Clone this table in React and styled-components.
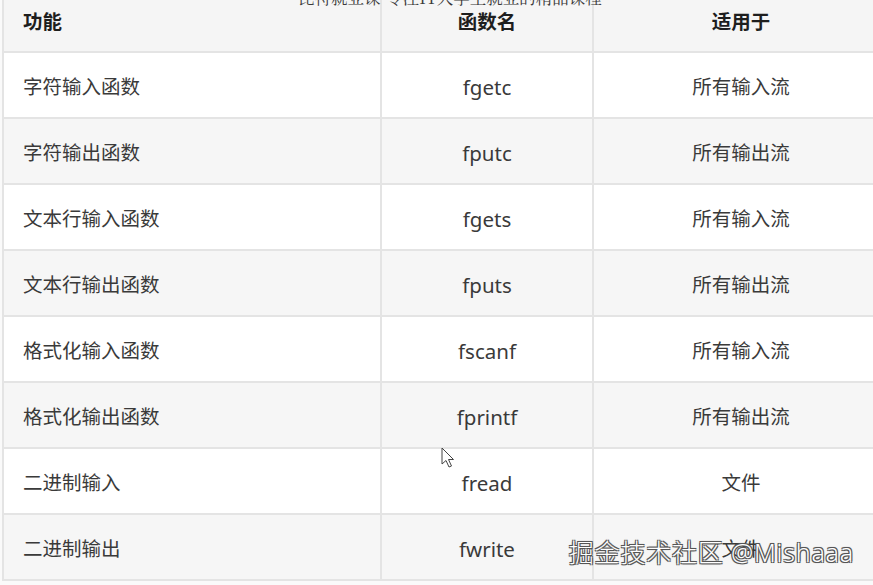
import React from "react";
import styled, { createGlobalStyle } from "styled-components";

const Global = createGlobalStyle`
  html, body { margin: 0; padding: 0; background: #fafafa; }
  body { width: 873px; height: 585px; overflow: hidden; font-family: "Noto Sans", "Noto Sans CJK SC", sans-serif; }
  #root { position: relative; width: 873px; height: 585px; overflow: hidden; }
`;

const Table = styled.div`
  margin-left: 2px;
  width: 884px;
  border-left: 2px solid #e4e4e4;
  display: flex;
  flex-direction: column;
`;

const Row = styled.div`
  display: grid;
  grid-template-columns: 378px 212px 1fr;
  height: ${(p) => (p.$head ? 53 : 66)}px;
  box-sizing: border-box;
  border-bottom: 2px solid #e4e4e4;
  background: ${(p) => (p.$head ? "#f5f5f5" : p.$alt ? "#f6f6f6" : "#ffffff")};
`;

const Cell = styled.div`
  display: flex;
  align-items: ${(p) => (p.$head ? "flex-start" : "center")};
  justify-content: ${(p) => (p.$left ? "flex-start" : "center")};
  padding-top: ${(p) => (p.$head ? "8px" : "4px")};
  padding-left: ${(p) => (p.$left ? "19px" : "0")};
  border-right: 2px solid #e4e4e4;
  font-size: 19.5px;
  line-height: 28px;
  font-weight: ${(p) => (p.$head ? 700 : 400)};
  color: ${(p) => (p.$head ? "#1e1e1e" : "#3a3a3a")};
  &:last-child { border-right: none; }
`;

const Code = styled.span`
  font-size: 20.5px;
`;

const TopCaption = styled.div`
  position: absolute;
  top: -12px;
  left: 298px;
  font-size: 16.5px;
  line-height: 18px;
  color: #3a3a3a;
  font-family: "Noto Serif CJK SC", "Noto Sans CJK SC", serif;
  white-space: nowrap;
`;

const Watermark = styled.div`
  position: absolute;
  right: 19px;
  bottom: 18px;
  font-size: 25px;
  line-height: 30px;
  font-weight: 300;
  letter-spacing: 0.8px;
  color: #ffffff;
  white-space: nowrap;
  text-shadow: -1px -1px 0 #555, 1px -1px 0 #555, -1px 1px 0 #555, 1px 1px 0 #555, 0 0 2px #333;
`;

const Cursor = styled.svg`
  position: absolute;
  left: 441px;
  top: 447px;
`;

const rows = [
  ["字符输入函数", "fgetc", "所有输入流"],
  ["字符输出函数", "fputc", "所有输出流"],
  ["文本行输入函数", "fgets", "所有输入流"],
  ["文本行输出函数", "fputs", "所有输出流"],
  ["格式化输入函数", "fscanf", "所有输入流"],
  ["格式化输出函数", "fprintf", "所有输出流"],
  ["二进制输入", "fread", "文件"],
  ["二进制输出", "fwrite", "文件"],
];

export default function App() {
  return (
    <>
      <Global />
      <Table>
        <Row $head>
          <Cell $head $left>功能</Cell>
          <Cell $head>函数名</Cell>
          <Cell $head>适用于</Cell>
        </Row>
        {rows.map((r, i) => (
          <Row key={i} $alt={i % 2 === 1}>
            <Cell $left>{r[0]}</Cell>
            <Cell><Code>{r[1]}</Code></Cell>
            <Cell>{r[2]}</Cell>
          </Row>
        ))}
      </Table>
      <TopCaption>比特就业课-专注IT大学生就业的精品课程</TopCaption>
      <Cursor width="14" height="22" viewBox="0 0 14 22">
        <path d="M1 1 L1 17 L5 13.5 L8 20 L10.5 19 L7.5 12.5 L12.5 12.5 Z" fill="#fff" stroke="#444" strokeWidth="1" strokeLinejoin="round" />
      </Cursor>
      <Watermark>掘金技术社区 @Mishaaa</Watermark>
    </>
  );
}
